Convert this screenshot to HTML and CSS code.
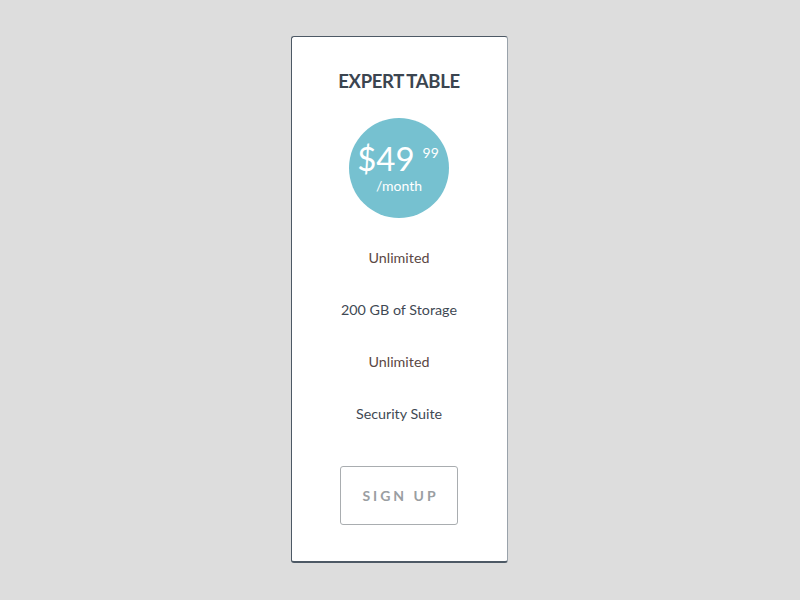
FILE: index.html
```html
<!DOCTYPE html>
<html>
<head>
<meta charset="utf-8">
<link rel="stylesheet" href="styles.css">
</head>
<body>
<div class="page">
  <div class="card">
    <h2 class="title">EXPERT TABLE</h2>
    <div class="price">
      <div class="amount"><span class="dollars">$49</span><span class="cents">99</span></div>
      <div class="period">/month</div>
    </div>
    <ul class="features">
      <li class="warm">Unlimited</li>
      <li>200 GB of Storage</li>
      <li class="warm">Unlimited</li>
      <li>Security Suite</li>
    </ul>
    <a class="signup">SIGN UP</a>
  </div>
</div>
</body>
</html>
```

FILE: styles.css
```css
html, body {
  margin: 0;
  padding: 0;
  background: #dddddd;
  font-family: Lato, "Open Sans", sans-serif;
}
.page {
  display: flex;
  justify-content: center;
  padding-top: 36px;
  padding-right: 2px;
}
.card {
  box-sizing: border-box;
  width: 217px;
  height: 527px;
  background: #fff;
  border: 1px solid #4d5965;
  border-right-color: #9aa3ab;
  border-bottom-width: 2px;
  border-radius: 3px;
  display: flex;
  flex-direction: column;
  align-items: center;
}
.title {
  margin: 32px 0 0;
  font-size: 18.5px;
  font-weight: 700;
  color: #3b4550;
  letter-spacing: -0.3px;
  word-spacing: -1px;
  line-height: 24px;
}
.price {
  margin-top: 25px;
  width: 100px;
  height: 100px;
  border-radius: 50%;
  background: #76c1d0;
  color: #fff;
  display: flex;
  flex-direction: column;
  align-items: center;
  justify-content: center;
}
.amount {
  display: flex;
  align-items: flex-start;
  margin-top: 1px;
  margin-left: -2px;
}
.dollars {
  font-size: 33px;
  font-weight: 400;
  line-height: 30px;
}
.cents {
  font-size: 14px;
  line-height: 14px;
  margin-left: 8px;
  margin-top: 3px;
}
.period {
  font-size: 14px;
  line-height: 16px;
  margin-top: 5px;
}
.features {
  list-style: none;
  margin: 31px 0 0;
  padding: 0;
  display: flex;
  flex-direction: column;
  align-items: center;
  gap: 34px;
}
.features li {
  font-size: 14.3px;
  line-height: 18px;
  color: #3f4954;
}
.features li.warm {
  color: #5b4844;
}
.signup {
  margin-top: 43px;
  box-sizing: border-box;
  width: 118px;
  height: 59px;
  border: 1px solid #a9adb0;
  border-radius: 3px;
  display: flex;
  align-items: center;
  justify-content: center;
  font-size: 14px;
  font-weight: 700;
  letter-spacing: 3px;
  padding-left: 3px;
  color: #9a9ea2;
}
```
